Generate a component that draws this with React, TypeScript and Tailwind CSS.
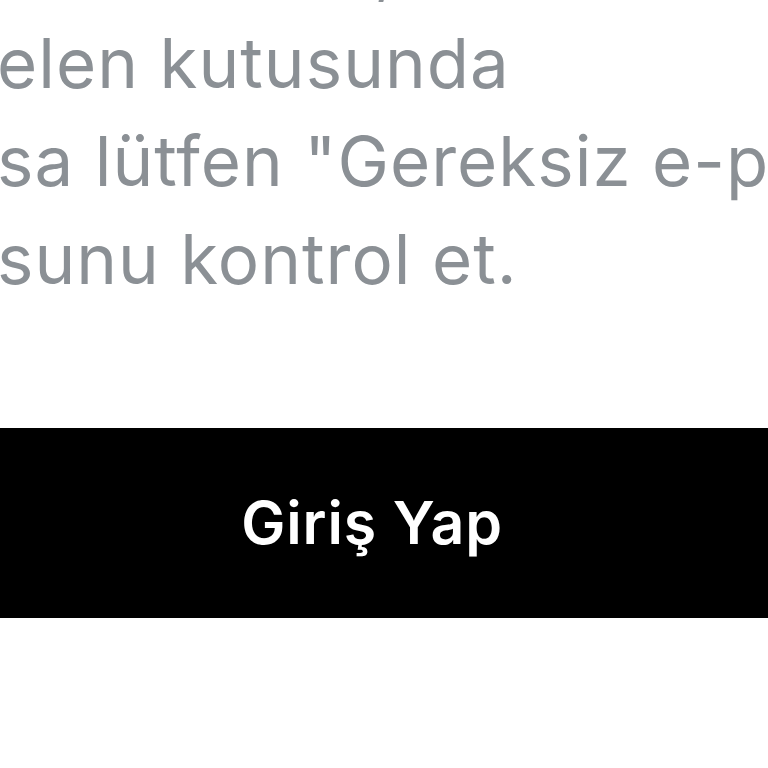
import React from 'react';

const lines = ['ını kontrol et,', 'elen kutusunda', 'sa lütfen "Gereksiz e-posta"', 'sunu kontrol et.'];

export default function App() {
  return (
    <div className="w-full h-[768px] bg-white overflow-hidden" style={{ fontFamily: 'Inter, "Noto Sans", sans-serif' }}>
      {/* Bilgi metni */}
      <div className="mt-[-84px] text-[69px] leading-[98px] tracking-[0.015em] text-[#8b9095] whitespace-nowrap">
        {lines.map((line, i) => (
          <div key={i} className={i === 0 ? 'ml-[-40px]' : 'ml-[-3px]'}>
            {line}
          </div>
        ))}
      </div>

      {/* Giriş butonu */}
      <div className="mt-[120px]">
        <button className="w-full h-[190px] bg-black text-white text-[59px] font-semibold tracking-[0.015em] flex items-center justify-center pr-[24px]">
          Giriş Yap
        </button>
      </div>
    </div>
  );
}
